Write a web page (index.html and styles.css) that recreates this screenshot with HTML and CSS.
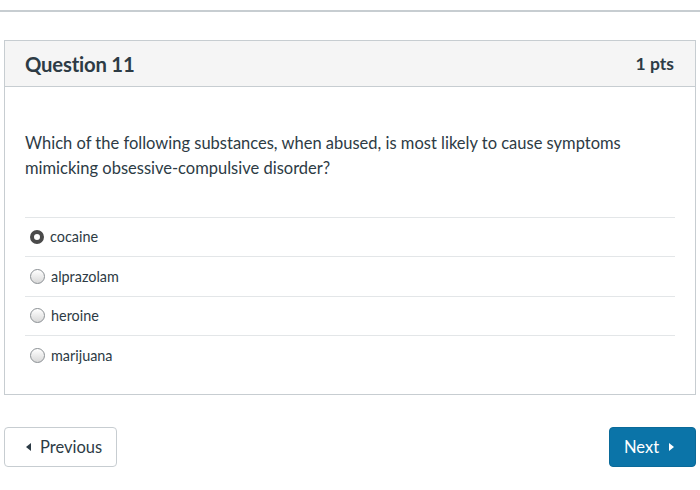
FILE: index.html
```html
<!DOCTYPE html>
<html>
<head>
<meta charset="utf-8">
<link rel="stylesheet" href="styles.css">
</head>
<body>
<div class="topline"></div>
<div class="panel">
  <div class="header">
    <span class="title">Question 11</span>
    <span class="pts">1 pts</span>
  </div>
  <div class="body">
    <p class="qtext">Which of the following substances, when abused, is most likely to cause symptoms mimicking obsessive-compulsive disorder?</p>
    <div class="answers">
      <div class="answer"><span class="radio checked"></span><span>cocaine</span></div>
      <div class="answer"><span class="radio"></span><span>alprazolam</span></div>
      <div class="answer"><span class="radio"></span><span>heroine</span></div>
      <div class="answer"><span class="radio"></span><span>marijuana</span></div>
    </div>
  </div>
</div>
<div class="nav">
  <button class="btn prev"><span class="tri-l"></span>Previous</button>
  <button class="btn next">Next<span class="tri-r"></span></button>
</div>
</body>
</html>
```
FILE: styles.css
```css
html, body { margin: 0; padding: 0; background: #fff; }
body { font-family: Lato, "Open Sans", sans-serif; color: #2d3b45; width: 700px; }
.topline { height: 10px; border-bottom: 2px solid #c7cdd1; }
.panel { margin: 28px 4px 0 4px; border: 1px solid #c7cdd1; }
.header { height: 45px; background: #f5f5f5; border-bottom: 1px solid #c7cdd1; display: flex; align-items: center; justify-content: space-between; padding: 0 21px 0 20px; }
.title { font-size: 20.3px; font-weight: 700; color: #2d3b45; letter-spacing: -0.2px; }
.pts { font-size: 17.5px; font-weight: 700; color: #2d3b45; }
.body { padding: 44px 20px 18px 20px; }
.qtext { margin: 0; font-size: 16.5px; line-height: 25px; color: #2d3b45; width: 630px; }
.answers { margin-top: 36px; border-top: 1px solid #e3e6e8; }
.answer { height: 39.4px; border-bottom: 1px solid #e3e6e8; display: flex; align-items: center; font-size: 14.4px; line-height: 17px; padding-bottom: 1px; box-sizing: border-box; color: #2d3b45; padding-left: 5px; }
.answer:last-child { border-bottom: none; }
.radio { width: 13px; height: 13px; border-radius: 50%; border: 1px solid #8a8f93; background: linear-gradient(#fff, #d8d8d8); margin-right: 6px; box-sizing: content-box; }
.radio.checked { background: #fff; border: 4.5px solid #4a4a4a; width: 6px; height: 6px; }
.nav { display: flex; justify-content: space-between; margin: 32px 4px 0 4px; }
.btn { height: 40px; border-radius: 4px; font-family: Lato, "Open Sans", sans-serif; font-size: 16.5px; display: flex; align-items: center; cursor: pointer; }
.prev { background: #fff; border: 1px solid #c7cdd1; color: #2d3b45; padding: 0 14px 0 21px; width: 113px; }
.next { background: #0b74a8; border: 1px solid #0a6a99; color: #fff; padding: 0 0 0 14px; width: 87px; }
.tri-l { width: 0; height: 0; border-top: 4px solid transparent; border-bottom: 4px solid transparent; border-right: 5px solid #2d3b45; margin-right: 9px; }
.tri-r { width: 0; height: 0; border-top: 4px solid transparent; border-bottom: 4px solid transparent; border-left: 5px solid #fff; margin-left: 10px; }
```
